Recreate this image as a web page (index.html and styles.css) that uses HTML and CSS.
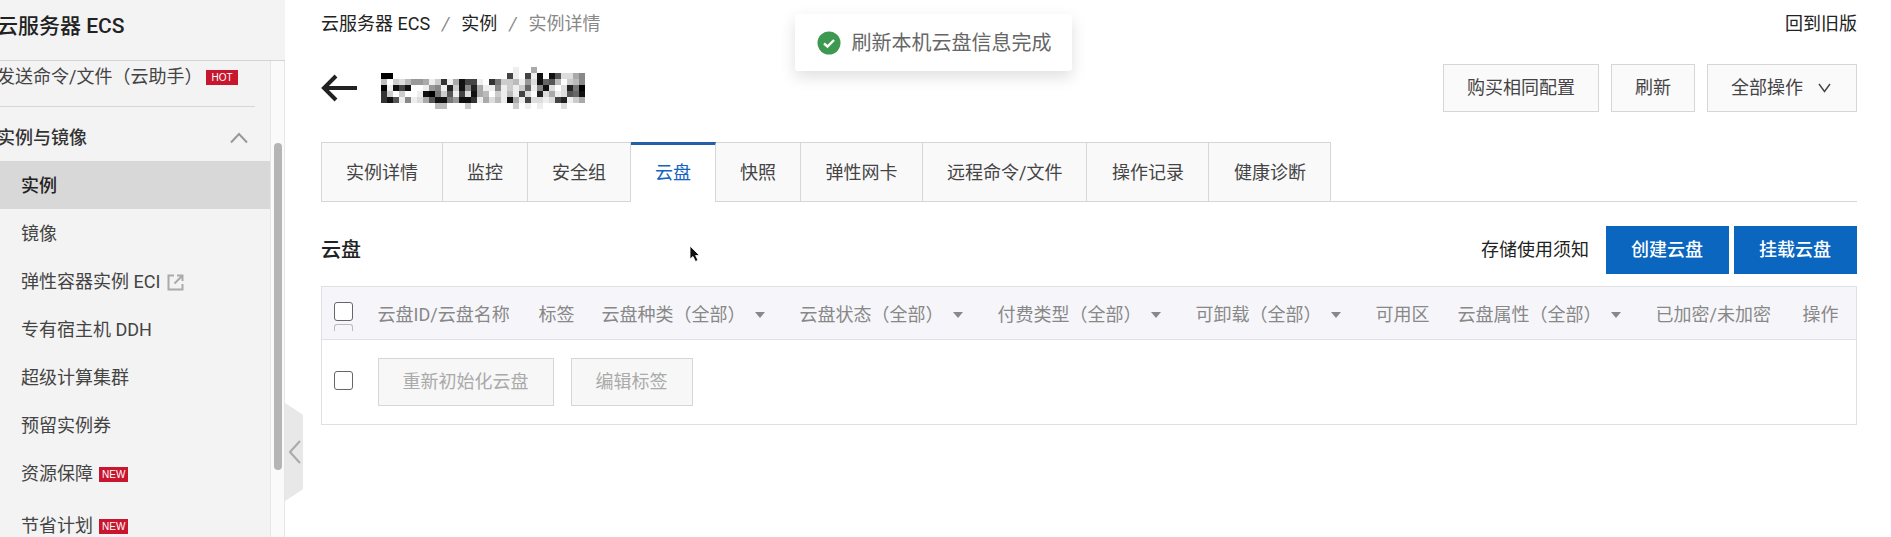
FILE: index.html
```html
<!DOCTYPE html>
<html lang="zh-CN">
<head>
  <meta charset="UTF-8">
  <title>云服务器 ECS - 实例详情</title>
  <link rel="stylesheet" href="styles.css">
</head>
<body>

<aside class="sidebar">
  <h1 class="product">云服务器 ECS</h1>
  <div class="nav-wrap">
    <nav class="nav">
      <a class="nav-top" href="#">发送命令/文件（云助手）<span class="tag hot">HOT</span></a>
      <button class="nav-group" type="button">
        实例与镜像
        <svg width="18" height="12" viewBox="0 0 18 12"><path d="M1 10.5L9 2L17 10.5" fill="none" stroke="#999" stroke-width="2"/></svg>
      </button>
      <a class="nav-item active" href="#">实例</a>
      <a class="nav-item" href="#">镜像</a>
      <a class="nav-item" href="#">弹性容器实例 ECI
        <svg class="external" width="17" height="17" viewBox="0 0 17 17"><path d="M7 1.5H1.5V15.5H15.5V10M10 1.5H15.5V7M15 2L7.5 9.5" fill="none" stroke="#aaa" stroke-width="2"/></svg>
      </a>
      <a class="nav-item" href="#">专有宿主机 DDH</a>
      <a class="nav-item" href="#">超级计算集群</a>
      <a class="nav-item" href="#">预留实例券</a>
      <a class="nav-item" href="#">资源保障<span class="tag">NEW</span></a>
      <a class="nav-item last" href="#">节省计划<span class="tag">NEW</span></a>
    </nav>
    <div class="scroll-track"><div class="scroll-thumb"></div></div>
  </div>
  <button class="collapse" type="button" aria-label="收起菜单">
    <svg width="12" height="24" viewBox="0 0 12 24"><path d="M11 1L1 12L11 23" fill="none" stroke="#aaa" stroke-width="2"/></svg>
  </button>
</aside>

<main class="main">
  <div class="topline">
    <div class="breadcrumb">
      <a href="#">云服务器 ECS</a><i>/</i><a href="#">实例</a><i>/</i><span>实例详情</span>
    </div>
    <a href="#">回到旧版</a>
  </div>

  <div class="title-row">
    <a class="back" href="#" aria-label="返回">
      <svg width="37" height="28" viewBox="0 0 37 28"><path d="M36 14H3M15 2L3 14L15 26" fill="none" stroke="#222" stroke-width="4"/></svg>
    </a>
    <svg class="masked-name" id="maskedName" width="204" height="42" viewBox="0 0 34 7" shape-rendering="crispEdges" aria-label="实例名称"></svg>
    <div class="actions">
      <button class="btn" type="button">购买相同配置</button>
      <button class="btn" type="button">刷新</button>
      <button class="btn" type="button">全部操作
        <svg class="down" width="13" height="10" viewBox="0 0 13 10"><path d="M1 1L6.5 8.5L12 1" fill="none" stroke="#444" stroke-width="1.4"/></svg>
      </button>
    </div>
  </div>

  <div class="tabs">
    <a class="tab wide" href="#">实例详情</a>
    <a class="tab" href="#">监控</a>
    <a class="tab" href="#">安全组</a>
    <a class="tab active" href="#">云盘</a>
    <a class="tab" href="#">快照</a>
    <a class="tab wide" href="#">弹性网卡</a>
    <a class="tab" href="#">远程命令/文件</a>
    <a class="tab wide" href="#">操作记录</a>
    <a class="tab wide" href="#">健康诊断</a>
  </div>

  <div class="section-head">
    <h2>云盘</h2>
    <a href="#">存储使用须知</a>
    <button class="btn primary" type="button">创建云盘</button>
    <button class="btn primary" type="button">挂载云盘</button>
  </div>

  <table class="disks">
    <colgroup>
      <col class="c-check"><col class="c-id"><col class="c-tag">
      <col class="c-filter"><col class="c-filter"><col class="c-filter">
      <col class="c-detach"><col class="c-zone"><col class="c-filter">
      <col><col class="c-op">
    </colgroup>
    <thead>
      <tr>
        <th class="check"><input type="checkbox" aria-label="全选"><span class="check-edge"></span></th>
        <th>云盘ID/云盘名称</th>
        <th>标签</th>
        <th>云盘种类（全部）<span class="caret"></span></th>
        <th>云盘状态（全部）<span class="caret"></span></th>
        <th>付费类型（全部）<span class="caret"></span></th>
        <th>可卸载（全部）<span class="caret"></span></th>
        <th>可用区</th>
        <th>云盘属性（全部）<span class="caret"></span></th>
        <th>已加密/未加密</th>
        <th>操作</th>
      </tr>
    </thead>
    <tbody>
      <tr>
        <td class="check"><input type="checkbox" aria-label="选择云盘"></td>
        <td class="batch" colspan="10">
          <div class="batch-btns">
            <button class="btn" type="button" disabled>重新初始化云盘</button>
            <button class="btn" type="button" disabled>编辑标签</button>
          </div>
        </td>
      </tr>
    </tbody>
  </table>
</main>

<div class="toast" role="status">
  <svg width="24" height="24" viewBox="0 0 24 24"><circle cx="12" cy="12" r="11.5" fill="#3d9950"/><path d="M7 12.5L10.5 15.5L17 9" fill="none" stroke="#fff" stroke-width="2.4"/></svg>
  刷新本机云盘信息完成
</div>

<svg class="cursor" width="12" height="18" viewBox="0 0 12 18"><path d="M1 1V14L4 11.5L6.5 16.5L9 15.3L6.6 10.5H10.5Z" fill="#111" stroke="#fff" stroke-width=".8"/></svg>

<script>
  // instance name is masked: one hex digit = grey level of one block
  const rows = [
    "ffffffffffffffffffffffeffaffffffff",
    "00fffffffffffffffffff4ef4e1f15dda8",
    "bfcdb99aec3ea144ef37ccbe9d165bfcb8",
    "0e141ffe98e2c182aee8ecec6e81dfd270",
    "3cfcffe107c5e4d1abfcebe4df2daed561",
    "315e8eda51179113eadbe1ae4dded42eca",
    "fffffffffbbfffcfffffffcfefefffdfff"
  ];
  let blocks = "";
  rows.forEach((row, y) => {
    [...row].forEach((c, x) => {
      if (c !== "f") {
        blocks += `<rect x="${x}" y="${y}" width="1" height="1" fill="#${c}${c}${c}"/>`;
      }
    });
  });
  document.getElementById("maskedName").innerHTML = blocks;
</script>

</body>
</html>
```
FILE: styles.css
```css
* {
  box-sizing: border-box;
}

body {
  margin: 0;
  min-height: 100vh;
  display: flex;
  position: relative;
  overflow: hidden;
  font-family: Roboto, "Noto Sans CJK SC", sans-serif;
  font-size: 18px;
  line-height: 28px;
  color: #222;
  background: #fff;
}

a {
  color: inherit;
  text-decoration: none;
}

button {
  font: inherit;
  color: inherit;
  cursor: pointer;
}

svg {
  display: block;
  flex: none;
}

/* Sidebar */
.sidebar {
  position: relative;
  flex: none;
  width: 288px;
  height: 100vh;
  margin-left: -3px;
  display: flex;
  flex-direction: column;
  background: #f3f3f3;
}

.product {
  margin: 0;
  height: 61px;
  padding-top: 12px;
  font-size: 21px;
  font-weight: 500;
  border-bottom: 1px solid #d4d4d4;
}

.nav-wrap {
  flex: 1;
  min-height: 0;
  display: flex;
}

.nav {
  flex: 1;
  overflow: hidden;
  color: #444;
}

.nav-top {
  display: flex;
  align-items: center;
  height: 46px;
  padding-bottom: 13px;
  margin-right: 15px;
  border-bottom: 1px solid #d6d6d6;
}

.nav-group {
  display: flex;
  align-items: center;
  justify-content: space-between;
  width: 100%;
  height: 54px;
  padding: 8px 22px 0 0;
  border: none;
  background: none;
  font-weight: 500;
  color: #333;
}

.nav-item {
  display: flex;
  align-items: center;
  height: 48px;
  padding: 2px 0 0 24px;
}

.nav-item.active {
  background: #d8d8d8;
  font-weight: 500;
  color: #222;
}

.nav-item.last {
  margin-top: 4px;
}

.external {
  margin-left: 7px;
}

.tag {
  padding: 0 3px;
  margin-left: 6px;
  line-height: 15px;
  font-family: "Liberation Sans", sans-serif;
  font-size: 10px;
  color: #fff;
  background: #c7162e;
}

.tag.hot {
  padding: 0 5px;
  margin-left: 4px;
}

.scroll-track {
  width: 15px;
  padding: 82px 3px 0;
  background: #fafafa;
  border-left: 1px solid #e6e6e6;
  border-right: 1px solid #e6e6e6;
}

.scroll-thumb {
  width: 8px;
  height: 83%;
  border-radius: 4px;
  background: #b5b5b5;
}

.collapse {
  position: absolute;
  left: 100%;
  top: 403px;
  width: 18px;
  height: 98px;
  padding: 0 2px 0 4px;
  border: none;
  background: #e8e8e8;
  clip-path: polygon(0 0, 100% 12%, 100% 88%, 0 100%);
}

/* Main */
.main {
  flex: 1;
  min-width: 0;
  padding: 10px 34px 0 36px;
}

.topline {
  display: flex;
  justify-content: space-between;
}

.breadcrumb span,
.breadcrumb i {
  color: #888;
}

.breadcrumb i {
  margin: 0 12px;
}

.title-row {
  display: flex;
  align-items: center;
  height: 48px;
  margin-top: 26px;
}

.masked-name {
  margin-left: 23px;
}

.actions {
  display: flex;
  gap: 12px;
  margin-left: auto;
}

.btn {
  display: flex;
  align-items: center;
  height: 48px;
  padding: 0 23px;
  border: 1px solid #d6d6d6;
  border-radius: 0;
  background: #fafafa;
  color: #444;
  white-space: nowrap;
}

.btn .down {
  margin: 0 2px 0 15px;
}

.btn:disabled {
  padding: 0 24px;
  color: #aaa;
  background: #f7f7f7;
  cursor: default;
}

.btn.primary {
  padding: 0 26px 0 25px;
  border: none;
  color: #fff;
  font-weight: 500;
  background: #0a66bf;
}

.tabs {
  display: flex;
  height: 60px;
  margin-top: 30px;
  border-bottom: 1px solid #d6d6d6;
}

.tab {
  height: 59px;
  padding: 16px 24px 0;
  border: 1px solid #d6d6d6;
  border-width: 1px 1px 0 0;
  background: #f9f9f9;
  color: #444;
  text-align: center;
}

.tab.wide {
  min-width: 122px;
}

.tab:first-child {
  border-left-width: 1px;
}

.tab.active {
  height: 60px;
  padding-top: 14px;
  border-top: 3px solid #2260a8;
  background: #fff;
  color: #1464c0;
}

.section-head {
  display: flex;
  align-items: center;
  gap: 5px;
  margin: 24px 0 12px;
}

.section-head h2 {
  margin: 0 auto 0 0;
  font-size: 20px;
  font-weight: 500;
}

.section-head a {
  margin-right: 12px;
}

/* Disk table */
.disks {
  width: 100%;
  table-layout: fixed;
  border-collapse: collapse;
  border: 1px solid #e0e0e4;
}

.c-check { width: 45px; }
.c-id { width: 161px; }
.c-tag { width: 63px; }
.c-filter { width: 198px; }
.c-detach { width: 180px; }
.c-zone { width: 82px; }
.c-op { width: 65px; }

.disks th {
  height: 53px;
  padding: 4px 0 0 11px;
  border-bottom: 1px solid #e0e0e4;
  background: #f6f6fa;
  color: #888;
  font-weight: 400;
  text-align: left;
  white-space: nowrap;
}

.disks td {
  height: 85px;
  padding: 0 0 0 11px;
}

.disks .check {
  position: relative;
  padding: 0 0 0 12px;
}

.disks input {
  appearance: none;
  display: block;
  width: 19px;
  height: 19px;
  margin: 0 0 4px;
  border: 1px solid #666;
  border-radius: 3px;
  background: #fff;
}

.check-edge {
  position: absolute;
  left: 12px;
  bottom: 8px;
  width: 19px;
  height: 7px;
  border: 1px solid #bbb;
  border-bottom: none;
  border-radius: 3px 3px 0 0;
}

.caret {
  display: inline-block;
  margin-left: 9px;
  vertical-align: 3px;
  border: 5px solid transparent;
  border-top: 6px solid #888;
  border-bottom: none;
}

.batch-btns {
  display: flex;
  gap: 17px;
}

/* Overlays */
.toast {
  position: absolute;
  top: 14px;
  left: calc(50% - 151px);
  display: flex;
  align-items: center;
  gap: 11px;
  height: 57px;
  padding: 0 20px 0 22px;
  border-radius: 3px;
  background: #fff;
  color: #666;
  font-size: 20px;
  white-space: nowrap;
  box-shadow: 0 6px 16px rgba(0, 0, 0, 0.13);
}

.cursor {
  position: absolute;
  left: 689px;
  top: 245px;
}
```
